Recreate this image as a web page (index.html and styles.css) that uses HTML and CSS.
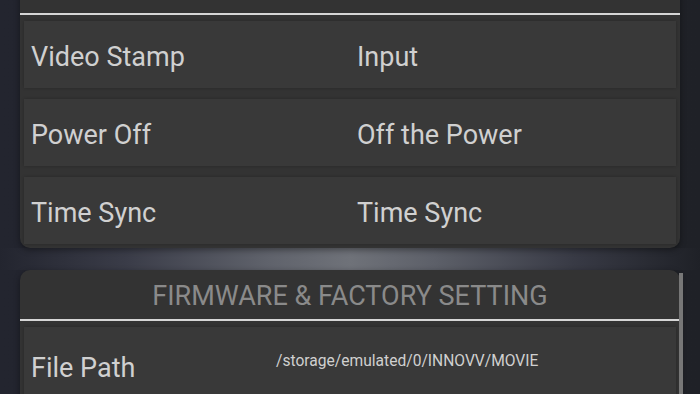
FILE: index.html
```html
<!DOCTYPE html>
<html lang="en">
<head>
  <meta charset="UTF-8" />
  <meta name="viewport" content="width=device-width, initial-scale=1.0"/>
  <title>Settings</title>
  <link rel="stylesheet" href="styles.css">
</head>
<body>
  <div class="screen">
    <section class="card card-first">
      <div class="card-head"></div>
      <div class="row">
        <span class="cell">Video Stamp</span>
        <span class="cell">Input</span>
      </div>
      <div class="row">
        <span class="cell">Power Off</span>
        <span class="cell">Off the Power</span>
      </div>
      <div class="row">
        <span class="cell">Time Sync</span>
        <span class="cell">Time Sync</span>
      </div>
    </section>

    <div class="divider"></div>

    <section class="card">
      <div class="card-head">FIRMWARE &amp; FACTORY SETTING</div>
      <div class="row row-path">
        <span class="cell label">File Path</span>
        <span class="path">/storage/emulated/0/INNOVV/MOVIE</span>
      </div>
      <div class="scrollbar"></div>
    </section>
  </div>
</body>
</html>
```

FILE: styles.css
```css
* {
  box-sizing: border-box;
}

body {
  margin: 0;
  height: 394px;
  overflow: hidden;
  font-family: Roboto, 'Noto Sans', sans-serif;
  background: linear-gradient(to right, #23252f, #1f2127);
  color: #d0d0d0;
}

.screen {
  padding: 0 20px;
}

.card {
  position: relative;
  background: #333333;
  border-radius: 10px;
  padding: 0 4px 4px;
  box-shadow: 0 2px 6px rgba(0, 0, 0, 0.4);
}

.card-first {
  margin-top: -36px;
}

.card-head {
  height: 51px;
  margin: 0 -4px 6px;
  border-bottom: 2px solid #d6d6d6;
  display: flex;
  align-items: center;
  justify-content: center;
  font-size: 27px;
  color: #8a8a8a;
  padding-top: 3px;
}

.row {
  display: grid;
  grid-template-columns: 1fr 1fr;
  align-items: center;
  height: 67px;
  padding-top: 5px;
  background: #393939;
  box-shadow: 0 0 3px rgba(0, 0, 0, 0.25);
  font-size: 27px;
}

.row + .row {
  margin-top: 11px;
}

.cell {
  padding-left: 7px;
}

.row-path {
  grid-template-columns: 252px 1fr;
  height: 90px;
  align-items: start;
  padding-top: 25px;
}

.path {
  font-size: 15.6px;
  color: #d0d0d0;
}

.divider {
  height: 22px;
  margin: 0 -20px;
  background: linear-gradient(to right, #23252f 0%, #3a3c48 18%, #5f626b 38%, #6f7279 50%, #5d6069 62%, #383a45 82%, #1f2127 100%);
}

.scrollbar {
  position: absolute;
  right: -3px;
  top: 3px;
  bottom: 0;
  width: 4px;
  background: #777777;
}
```
